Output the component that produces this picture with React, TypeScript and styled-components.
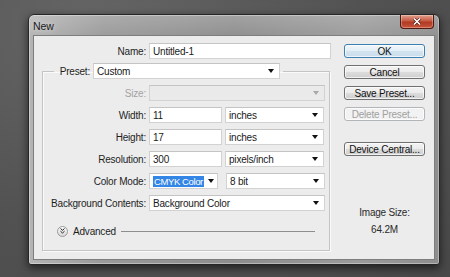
import React from "react";
import styled, { createGlobalStyle } from "styled-components";

const GlobalStyle = createGlobalStyle`
  html, body {
    margin: 0;
    padding: 0;
    width: 450px;
    height: 277px;
    overflow: hidden;
  }
  body {
    font-family: "Liberation Sans", Arial, sans-serif;
  }
`;

const Desktop = styled.div`
  width: 450px;
  height: 277px;
  box-sizing: border-box;
  padding: 14px 0 0 28px;
  background: radial-gradient(ellipse at 20% 10%, #656565 0%, #525252 55%, #484848 100%);
`;

const Window = styled.div`
  width: 412px;
  height: 251px;
  box-sizing: border-box;
  display: flex;
  flex-direction: column;
  padding: 0 4px 4px 4px;
  border: 1px solid #262626;
  border-radius: 6px 6px 3px 3px;
  background: linear-gradient(
      to bottom,
      rgba(255, 255, 255, 0.18),
      rgba(255, 255, 255, 0) 25px
    ),
    linear-gradient(to right, #b4b4b4 0%, #9a9a9a 18%, #8d8d8d 50%, #9b9b9b 80%, #8e8e8e 100%);
  box-shadow: 0 3px 9px rgba(0, 0, 0, 0.6), inset 0 0 0 1px rgba(255, 255, 255, 0.35);
`;

const TitleBar = styled.div`
  height: 20px;
  display: flex;
  align-items: flex-start;
  justify-content: space-between;
`;

const Title = styled.span`
  font-size: 10.5px;
  color: #1a1a1a;
  margin-top: 5px;
  letter-spacing: -0.1px;
  text-shadow: 0 0 6px rgba(255, 255, 255, 0.7);
`;

const CloseButton = styled.div`
  width: 34px;
  height: 14px;
  margin-right: 1px;
  box-sizing: border-box;
  display: flex;
  align-items: center;
  justify-content: center;
  border: 1px solid #4f1a12;
  border-top: none;
  border-radius: 0 0 4px 4px;
  background: linear-gradient(to bottom, #e0a090 0%, #c75a44 45%, #b23a22 55%, #c8553a 100%);
  box-shadow: inset 0 0 0 1px rgba(255, 255, 255, 0.3);
`;

const Client = styled.div`
  flex: 1;
  display: flex;
  box-sizing: border-box;
  background: #ececec;
  border: 1px solid #7e7e7e;
`;

const FormColumn = styled.div`
  display: flex;
  flex-direction: column;
  padding-top: 7px;
`;

const Row = styled.div`
  display: flex;
  align-items: center;
  height: 16px;
`;

const Label = styled.span<{ $width: number; $disabled?: boolean }>`
  width: ${(p) => p.$width}px;
  margin-right: 3px;
  text-align: right;
  font-size: 10px;
  letter-spacing: -0.2px;
  color: ${(p) => (p.$disabled ? "#a3a3a3" : "#1e1e1e")};
  white-space: nowrap;
`;

const Field = styled.div<{ $width: number; $disabled?: boolean; $gap?: number; $tight?: boolean }>`
  width: ${(p) => p.$width}px;
  height: 16px;
  flex-shrink: 0;
  box-sizing: border-box;
  display: flex;
  align-items: center;
  margin-left: ${(p) => p.$gap ?? 0}px;
  padding: 0 ${(p) => (p.$tight ? 3 : 5)}px 0 3px;
  background: ${(p) => (p.$disabled ? "#eaeaea" : "#ffffff")};
  border: 1px solid #d2d2d2;
  border-top-color: #c4c4c4;
  font-size: 10px;
  letter-spacing: -0.2px;
  color: #1a1a1a;
  white-space: nowrap;
  overflow: hidden;
`;

const Arrow = styled.span<{ $disabled?: boolean }>`
  margin-left: auto;
  flex-shrink: 0;
  width: 0;
  height: 0;
  border-left: 3px solid transparent;
  border-right: 3px solid transparent;
  border-top: 4px solid ${(p) => (p.$disabled ? "#a8a8a8" : "#111")};
`;

const Selected = styled.span`
  background: #3385e6;
  color: #ffffff;
  padding: 0 1px;
  font-size: 9.5px;
  line-height: 11px;
  letter-spacing: -0.4px;
`;

const Group = styled.fieldset`
  margin: 4px 0 0 8px;
  width: 288px;
  height: 188px;
  box-sizing: border-box;
  padding: 6px 3px 0 0;
  border: 1px solid #c4c4c4;
  box-shadow: 1px 1px 0 #fafafa, inset 1px 1px 0 #fafafa;
  display: flex;
  flex-direction: column;
  gap: 6px;
`;

const Legend = styled.legend`
  margin-left: 11px;
  padding: 0 3px;
  display: flex;
  align-items: center;
  height: 16px;
`;

const Advanced = styled.div`
  display: flex;
  align-items: center;
  margin: 8px 11px 0 14px;
  height: 12px;
  font-size: 10px;
  letter-spacing: -0.2px;
  color: #1e1e1e;
`;

const Toggle = styled.span`
  width: 11px;
  height: 11px;
  box-sizing: border-box;
  border-radius: 50%;
  border: 1px solid #9a9a9a;
  background: linear-gradient(to bottom, #fdfdfd, #d6d6d6);
  display: flex;
  align-items: center;
  justify-content: center;
  margin-right: 5px;
`;

const Rule = styled.span`
  flex: 1;
  height: 1px;
  margin-left: 5px;
  background: #8e8e8e;
`;

const ButtonColumn = styled.div`
  display: flex;
  flex-direction: column;
  align-items: center;
  padding-top: 8px;
  margin-left: 13px;
  width: 81px;
`;

const Button = styled.div<{ $primary?: boolean; $disabled?: boolean; $gap?: number }>`
  width: 81px;
  height: 14px;
  box-sizing: border-box;
  margin-top: ${(p) => p.$gap ?? 0}px;
  display: flex;
  align-items: center;
  justify-content: center;
  font-size: 10px;
  letter-spacing: -0.2px;
  border-radius: 3px;
  border: 1px solid
    ${(p) => (p.$primary ? "#3c7fb1" : p.$disabled ? "#b3b6b8" : "#707070")};
  color: ${(p) => (p.$disabled ? "#a0a0a0" : "#111")};
  background: ${(p) =>
    p.$disabled
      ? "#f2f2f2"
      : p.$primary
      ? "linear-gradient(to bottom, #f1f7fb 0%, #e3eef6 50%, #d3e4f0 50%, #c9ddec 100%)"
      : "linear-gradient(to bottom, #f3f3f3 0%, #ebebeb 50%, #dddddd 50%, #cfcfcf 100%)"};
  box-shadow: inset 0 0 0 1px rgba(255, 255, 255, 0.7);
`;

const SizeInfo = styled.div`
  margin-top: 50px;
  display: flex;
  flex-direction: column;
  align-items: center;
  gap: 4px;
  font-size: 10px;
  letter-spacing: -0.2px;
  line-height: 13px;
  color: #2a2a2a;
`;

const units: { label: string; value: string; unit: string }[] = [
  { label: "Width:", value: "11", unit: "inches" },
  { label: "Height:", value: "17", unit: "inches" },
  { label: "Resolution:", value: "300", unit: "pixels/inch" },
];

const App = () => {
  return (
    <>
      <GlobalStyle />
      <Desktop>
        <Window>
          <TitleBar>
            <Title>New</Title>
            <CloseButton>
              <svg width="8" height="7" viewBox="0 0 8 7">
                <path d="M1 0.5 L7 6.5 M7 0.5 L1 6.5" stroke="#3a0c05" strokeWidth="2.6" />
                <path d="M1 0.5 L7 6.5 M7 0.5 L1 6.5" stroke="#ffffff" strokeWidth="1.6" />
              </svg>
            </CloseButton>
          </TitleBar>
          <Client>
            <FormColumn>
              <Row>
                <Label $width={112}>Name:</Label>
                <Field $width={182}>Untitled-1</Field>
              </Row>
              <Group>
                <Legend>
                  <Label $width={33}>Preset:</Label>
                  <Field $width={187}>
                    Custom
                    <Arrow />
                  </Field>
                </Legend>
                <Row>
                  <Label $width={103} $disabled>
                    Size:
                  </Label>
                  <Field $width={176} $disabled>
                    <Arrow $disabled />
                  </Field>
                </Row>
                {units.map((u) => (
                  <Row key={u.label}>
                    <Label $width={103}>{u.label}</Label>
                    <Field $width={73}>{u.value}</Field>
                    <Field $width={99} $gap={3}>
                      {u.unit}
                      <Arrow />
                    </Field>
                  </Row>
                ))}
                <Row>
                  <Label $width={103}>Color Mode:</Label>
                  <Field $width={69} $tight>
                    <Selected>CMYK Color</Selected>
                    <Arrow />
                  </Field>
                  <Field $width={99} $gap={8}>
                    8 bit
                    <Arrow />
                  </Field>
                </Row>
                <Row>
                  <Label $width={103}>Background Contents:</Label>
                  <Field $width={176}>
                    Background Color
                    <Arrow />
                  </Field>
                </Row>
                <Advanced>
                  <Toggle>
                    <svg width="5" height="6" viewBox="0 0 5 6">
                      <path d="M0.5 0.5 L2.5 2.3 L4.5 0.5 M0.5 3.2 L2.5 5 L4.5 3.2" stroke="#222" strokeWidth="1" fill="none" />
                    </svg>
                  </Toggle>
                  Advanced
                  <Rule />
                </Advanced>
              </Group>
            </FormColumn>
            <ButtonColumn>
              <Button $primary>OK</Button>
              <Button $gap={7}>Cancel</Button>
              <Button $gap={7}>Save Preset...</Button>
              <Button $gap={7} $disabled>
                Delete Preset...
              </Button>
              <Button $gap={21}>Device Central...</Button>
              <SizeInfo>
                <span>Image Size:</span>
                <span>64.2M</span>
              </SizeInfo>
            </ButtonColumn>
          </Client>
        </Window>
      </Desktop>
    </>
  );
};

export default App;
